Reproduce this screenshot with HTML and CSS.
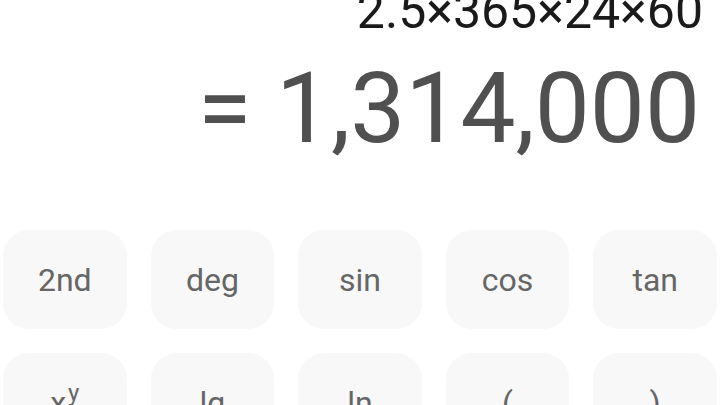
FILE: index.html
```html
<!DOCTYPE html>
<html lang="en">
<head>
  <meta charset="UTF-8" />
  <meta name="viewport" content="width=device-width, initial-scale=1" />
  <title>Calculator</title>
  <link rel="stylesheet" href="styles.css">
</head>
<body>

  <div id="display">
    <div class="expr">2.5×365×24×60</div>
    <div class="result">= 1,314,000</div>
  </div>

  <div id="keys">
    <div class="key">2nd</div>
    <div class="key">deg</div>
    <div class="key">sin</div>
    <div class="key">cos</div>
    <div class="key">tan</div>
    <div class="key"><span>x<sup>y</sup></span></div>
    <div class="key">lg</div>
    <div class="key">ln</div>
    <div class="key">(</div>
    <div class="key">)</div>
  </div>

</body>
</html>
```

FILE: styles.css
```css
body {
  font-family: Roboto, "Noto Sans", sans-serif;
  background: #fff;
  margin: 0;
  height: 405px;
  overflow: hidden;
}

#display {
  text-align: right;
  padding-right: 20px;
}

.expr {
  font-size: 50px;
  line-height: 50px;
  margin-top: -14px;
  margin-right: -3px;
  color: #1a1a1a;
}

.result {
  font-size: 98px;
  line-height: 98px;
  margin-top: 24px;
  color: #505050;
}

#keys {
  display: grid;
  grid-template-columns: repeat(5, 1fr);
  grid-auto-rows: 99px;
  gap: 24px;
  padding: 0 3px;
  margin-top: 72px;
}

.key {
  background: #f8f8f8;
  border-radius: 26px;
  display: flex;
  justify-content: center;
  align-items: center;
  font-size: 32px;
  color: #666;
  user-select: none;
}

.key sup {
  display: inline-block;
  font-size: 24px;
  line-height: 1;
  vertical-align: baseline;
  transform: translateY(-13px);
  margin-left: 2px;
}
```
